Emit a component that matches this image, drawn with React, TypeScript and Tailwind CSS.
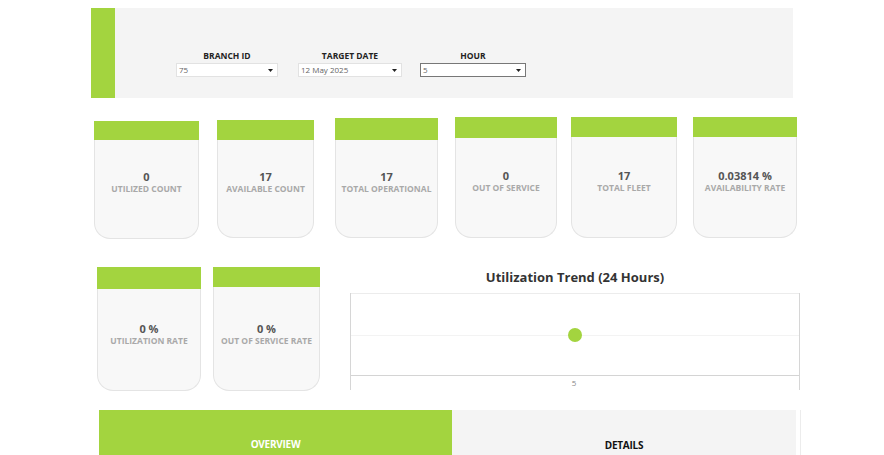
const GREEN = "bg-[#a3d43f]";

type Filter = { label: string; value: string; width: string; ml: string; focused?: boolean };

const FILTERS: Filter[] = [
  { label: "BRANCH ID", value: "75", width: "w-[102px]", ml: "ml-[61px]" },
  { label: "TARGET DATE", value: "12 May 2025", width: "w-[104px]", ml: "ml-[20px]" },
  { label: "HOUR", value: "5", width: "w-[106px]", ml: "ml-[18px]", focused: true },
];

type Kpi = { value: string; label: string; box: string; head: string; pad: string };

const ROW1: Kpi[] = [
  { value: "0", label: "UTILIZED COUNT", box: "ml-[94px] mt-[23px] w-[105px] h-[118px]", head: "h-[19px]", pad: "pt-[30px]" },
  { value: "17", label: "AVAILABLE COUNT", box: "ml-[18px] mt-[22px] w-[97px] h-[118px]", head: "h-[20px]", pad: "pt-[30px]" },
  { value: "17", label: "TOTAL OPERATIONAL", box: "ml-[21px] mt-[20px] w-[103px] h-[120px]", head: "h-[22px]", pad: "pt-[30px]" },
  { value: "0", label: "OUT OF SERVICE", box: "ml-[17px] mt-[19px] w-[102px] h-[121px]", head: "h-[21px]", pad: "pt-[31px]" },
  { value: "17", label: "TOTAL FLEET", box: "ml-[14px] mt-[19px] w-[106px] h-[121px]", head: "h-[20px]", pad: "pt-[32px]" },
  { value: "0.03814 %", label: "AVAILABILITY RATE", box: "ml-[16px] mt-[19px] w-[104px] h-[121px]", head: "h-[20px]", pad: "pt-[32px]" },
];

const ROW2: Kpi[] = [
  { value: "0 %", label: "UTILIZATION RATE", box: "ml-[97px] w-[104px] h-[124px]", head: "h-[22px]", pad: "pt-[33px]" },
  { value: "0 %", label: "OUT OF SERVICE RATE", box: "ml-[12px] w-[107px] h-[124px]", head: "h-[20px]", pad: "pt-[35px]" },
];

function KpiCard({ kpi }: { kpi: Kpi }) {
  return (
    <div className={`flex flex-col shrink-0 ${kpi.box}`}>
      <div className={`${GREEN} ${kpi.head} shrink-0`} />
      <div className={`flex-1 flex flex-col items-center bg-[#f8f8f8] border border-t-0 border-[#e4e4e4] rounded-b-[16px] ${kpi.pad}`}>
        <span className="text-[11px] leading-[13px] font-bold text-[#555]">{kpi.value}</span>
        <span className="text-[8.5px] leading-[12px] font-bold text-[#a9a9a9] whitespace-nowrap">{kpi.label}</span>
      </div>
    </div>
  );
}

export default function App() {
  return (
    <div
      className="w-[884px] h-[455px] overflow-hidden bg-white flex flex-col"
      style={{ fontFamily: '"Open Sans", "Noto Sans", sans-serif' }}
    >
      {/* Filter bar */}
      <div className="mt-[8px] ml-[91px] w-[702px] h-[90px] shrink-0 bg-[#f4f4f4] flex">
        <div className={`${GREEN} w-[24px] h-full`} />
        <div className="flex items-start pt-[41px]">
          {FILTERS.map((f) => (
            <div key={f.label} className={`flex flex-col items-center ${f.ml} ${f.width}`}>
              <span className="text-[8.5px] leading-[13px] font-bold text-[#222]">{f.label}</span>
              <div
                className={`mt-[1px] w-full h-[14px] bg-white flex items-center justify-between pl-[2px] pr-[4px] border ${
                  f.focused ? "border-[#777]" : "border-[#e2e2e2]"
                }`}
              >
                <span className="text-[8px] leading-none text-[#666]">{f.value}</span>
                <svg width="5" height="3" viewBox="0 0 5 3">
                  <path d="M0 0h5L2.5 3z" fill="#222" />
                </svg>
              </div>
            </div>
          ))}
        </div>
      </div>

      {/* KPI row 1 */}
      <div className="flex items-start shrink-0">
        {ROW1.map((k) => (
          <KpiCard key={k.label} kpi={k} />
        ))}
      </div>

      {/* Row 2: KPIs + chart */}
      <div className="flex items-start shrink-0 mt-[28px]">
        {ROW2.map((k) => (
          <KpiCard key={k.label} kpi={k} />
        ))}
        <div className="ml-[30px] w-[450px] flex flex-col">
          <div className="h-[21px] text-center text-[13px] leading-[21px] font-bold text-[#333]">
            Utilization Trend (24 Hours)
          </div>
          <div className="mt-[5px] h-[97px] border-l border-r border-[#d6d6d6] flex flex-col">
            <div className="relative h-[83px] border-t border-[#ececec] border-b border-b-[#d4d4d4]">
              <div className="absolute left-0 right-0 top-[41px] h-px bg-[#f3f3f3]" />
              <div className={`absolute left-[217px] top-[34px] w-[14px] h-[14px] rounded-full ${GREEN}`} />
            </div>
            <div className="text-center text-[8px] leading-[14px] text-[#888] pr-[2px]">5</div>
          </div>
        </div>
      </div>

      {/* Tabs */}
      <div className="flex shrink-0 mt-[19px] ml-[99px] h-[60px]">
        <div className={`${GREEN} w-[353px] flex justify-center pt-[27px]`}>
          <span className="text-[10px] leading-[14px] font-bold text-white tracking-tight">OVERVIEW</span>
        </div>
        <div className="bg-[#f4f4f4] w-[344px] flex justify-center pt-[28px]">
          <span className="text-[10px] leading-[14px] font-bold text-[#111] tracking-tight">DETAILS</span>
        </div>
        <div className="w-[5px] border-r border-[#ececec]" />
      </div>
    </div>
  );
}
